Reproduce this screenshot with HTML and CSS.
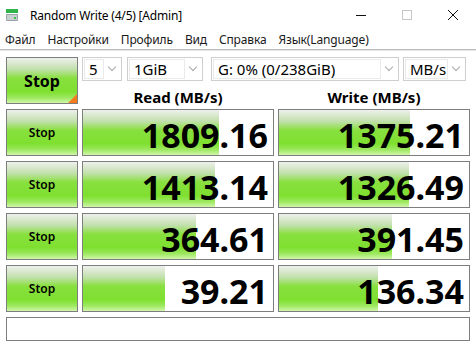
FILE: index.html
```html
<!DOCTYPE html>
<html lang="ru">
<head>
  <meta charset="UTF-8" />
  <title>Random Write (4/5) [Admin]</title>
  <link rel="stylesheet" href="styles.css">
</head>
<body>
  <div class="titlebar">
    <svg class="app-icon" width="14" height="14" viewBox="0 0 14 14">
      <rect x="1" y="1" width="12" height="4" fill="#2fb34a"/>
      <rect x="1" y="6" width="12" height="7" rx="1" fill="#9aa3a6"/>
      <rect x="2" y="7" width="10" height="5" fill="#c9d0d2"/>
      <rect x="9" y="9" width="2" height="2" fill="#3cc24e"/>
    </svg>
    <span class="title">Random Write (4/5) [Admin]</span>
    <div class="win-controls">
      <svg width="46" height="30" viewBox="0 0 46 30"><path d="M18 15.5h10" stroke="#111" stroke-width="1"/></svg>
      <svg width="46" height="30" viewBox="0 0 46 30"><rect x="18.5" y="10.5" width="9" height="9" fill="none" stroke="#c6c6c6"/></svg>
      <svg width="46" height="30" viewBox="0 0 46 30"><path d="M18 10l10 10M28 10l-10 10" stroke="#111" stroke-width="1"/></svg>
    </div>
  </div>

  <nav class="menubar">
    <span>Файл</span>
    <span>Настройки</span>
    <span>Профиль</span>
    <span>Вид</span>
    <span>Справка</span>
    <span>Язык(Language)</span>
  </nav>

  <main class="board">
    <div class="stop big">Stop<span class="corner"></span></div>

    <div class="settings">
      <div class="selects">
        <div class="select w-count"><span class="val">5</span><span class="chev"></span></div>
        <div class="select w-size"><span class="val">1GiB</span><span class="chev"></span></div>
        <div class="select w-drive"><span class="val">G: 0% (0/238GiB)</span><span class="chev"></span></div>
        <div class="select w-unit"><span class="val">MB/s</span><span class="chev"></span></div>
      </div>
      <div class="heads">
        <div>Read (MB/s)</div>
        <div>Write (MB/s)</div>
      </div>
    </div>

    <div class="stop">Stop</div>
    <div class="cell"><div class="bar" style="width: 136px"></div><span>1809.16</span></div>
    <div class="cell"><div class="bar" style="width: 131px"></div><span>1375.21</span></div>

    <div class="stop">Stop</div>
    <div class="cell"><div class="bar" style="width: 132px"></div><span>1413.14</span></div>
    <div class="cell"><div class="bar" style="width: 130px"></div><span>1326.49</span></div>

    <div class="stop">Stop</div>
    <div class="cell"><div class="bar" style="width: 113px"></div><span>364.61</span></div>
    <div class="cell"><div class="bar" style="width: 113px"></div><span>391.45</span></div>

    <div class="stop">Stop</div>
    <div class="cell"><div class="bar" style="width: 82px"></div><span>39.21</span></div>
    <div class="cell"><div class="bar" style="width: 99px"></div><span>136.34</span></div>

    <div class="status"></div>
  </main>
</body>
</html>
```

FILE: styles.css
```css
body {
  margin: 0;
  width: 476px;
  height: 348px;
  background: #fff;
  color: #000;
  font-family: 'Noto Sans', 'Open Sans', sans-serif;
  overflow: hidden;
}
.titlebar {
  height: 30px;
  display: flex;
  align-items: center;
}
.app-icon {
  margin-left: 5px;
  margin-top: -1px;
}
.title {
  margin-left: 11px;
  font-size: 12px;
  letter-spacing: -0.2px;
}
.win-controls {
  margin-left: auto;
  display: flex;
}
.win-controls svg {
  display: block;
}
.menubar {
  height: 19px;
  display: flex;
  align-items: center;
  font-size: 12px;
  letter-spacing: -0.15px;
  color: #1a1a1a;
  padding-left: 5px;
  border-bottom: 1px solid #bcbcbc;
  box-shadow: 0 1px 0 #e4e4e4;
}
.menubar span {
  margin-right: 12px;
}
.board {
  display: grid;
  grid-template-columns: 72px 192px 192px;
  grid-template-rows: 47px repeat(4, 47px) 24px;
  column-gap: 4px;
  row-gap: 5px;
  margin: 7px 0 0 6px;
}
.stop {
  position: relative;
  display: flex;
  align-items: center;
  justify-content: center;
  border: 1px solid #7e7e7e;
  font-size: 12px;
  font-weight: 600;
  background: linear-gradient(#eef0ec 0%, #c2e0ad 25%, #88e03e 45%, #7fe030 75%, #9ce860 88%, #d2f6aa 100%);
}
.stop.big {
  font-size: 16px;
  font-weight: 700;
}
.corner {
  position: absolute;
  right: 0;
  bottom: 0;
  width: 0;
  height: 0;
  border-left: 9px solid transparent;
  border-bottom: 9px solid #f47a1c;
}
.settings {
  grid-column: 2 / 4;
  display: flex;
  flex-direction: column;
}
.selects {
  display: flex;
  height: 24px;
}
.select {
  display: flex;
  align-items: stretch;
  box-sizing: border-box;
  height: 24px;
  border: 1px solid #cfcfcf;
  font-size: 15px;
}
.select .val {
  flex: 1;
  display: flex;
  align-items: center;
  padding-left: 4px;
  margin: 1px 0 1px 1px;
  border: 1px solid #eaeaea;
  white-space: nowrap;
}
.chev {
  width: 17px;
  position: relative;
}
.chev::after {
  content: '';
  position: absolute;
  left: 5px;
  top: 6px;
  width: 5px;
  height: 5px;
  border-right: 1px solid #a8a8a8;
  border-bottom: 1px solid #a8a8a8;
  transform: rotate(45deg);
}
.w-count { width: 40px; margin-right: 5px; }
.w-size { width: 76px; margin-right: 8px; }
.w-drive { width: 188px; margin-right: 4px; }
.w-unit { width: 63px; }
.heads {
  display: grid;
  grid-template-columns: 192px 192px;
  column-gap: 4px;
  flex: 1;
  align-items: center;
  text-align: center;
  font-size: 15px;
  font-weight: 700;
  padding-top: 6px;
}
.cell {
  position: relative;
  border: 1px solid #7e7e7e;
  display: flex;
  align-items: center;
  justify-content: flex-end;
  padding-right: 5px;
  overflow: hidden;
}
.bar {
  position: absolute;
  left: 0;
  top: 0;
  bottom: 0;
  background: linear-gradient(#eef0ec 0%, #c2e0ad 25%, #88e03e 45%, #7fe030 75%, #9ce860 88%, #d2f6aa 100%);
}
.cell span {
  position: relative;
  top: 2px;
  font-size: 34px;
  font-weight: 700;
  line-height: 1;
}
.status {
  grid-column: 1 / 4;
  border: 1px solid #7e7e7e;
}
```
